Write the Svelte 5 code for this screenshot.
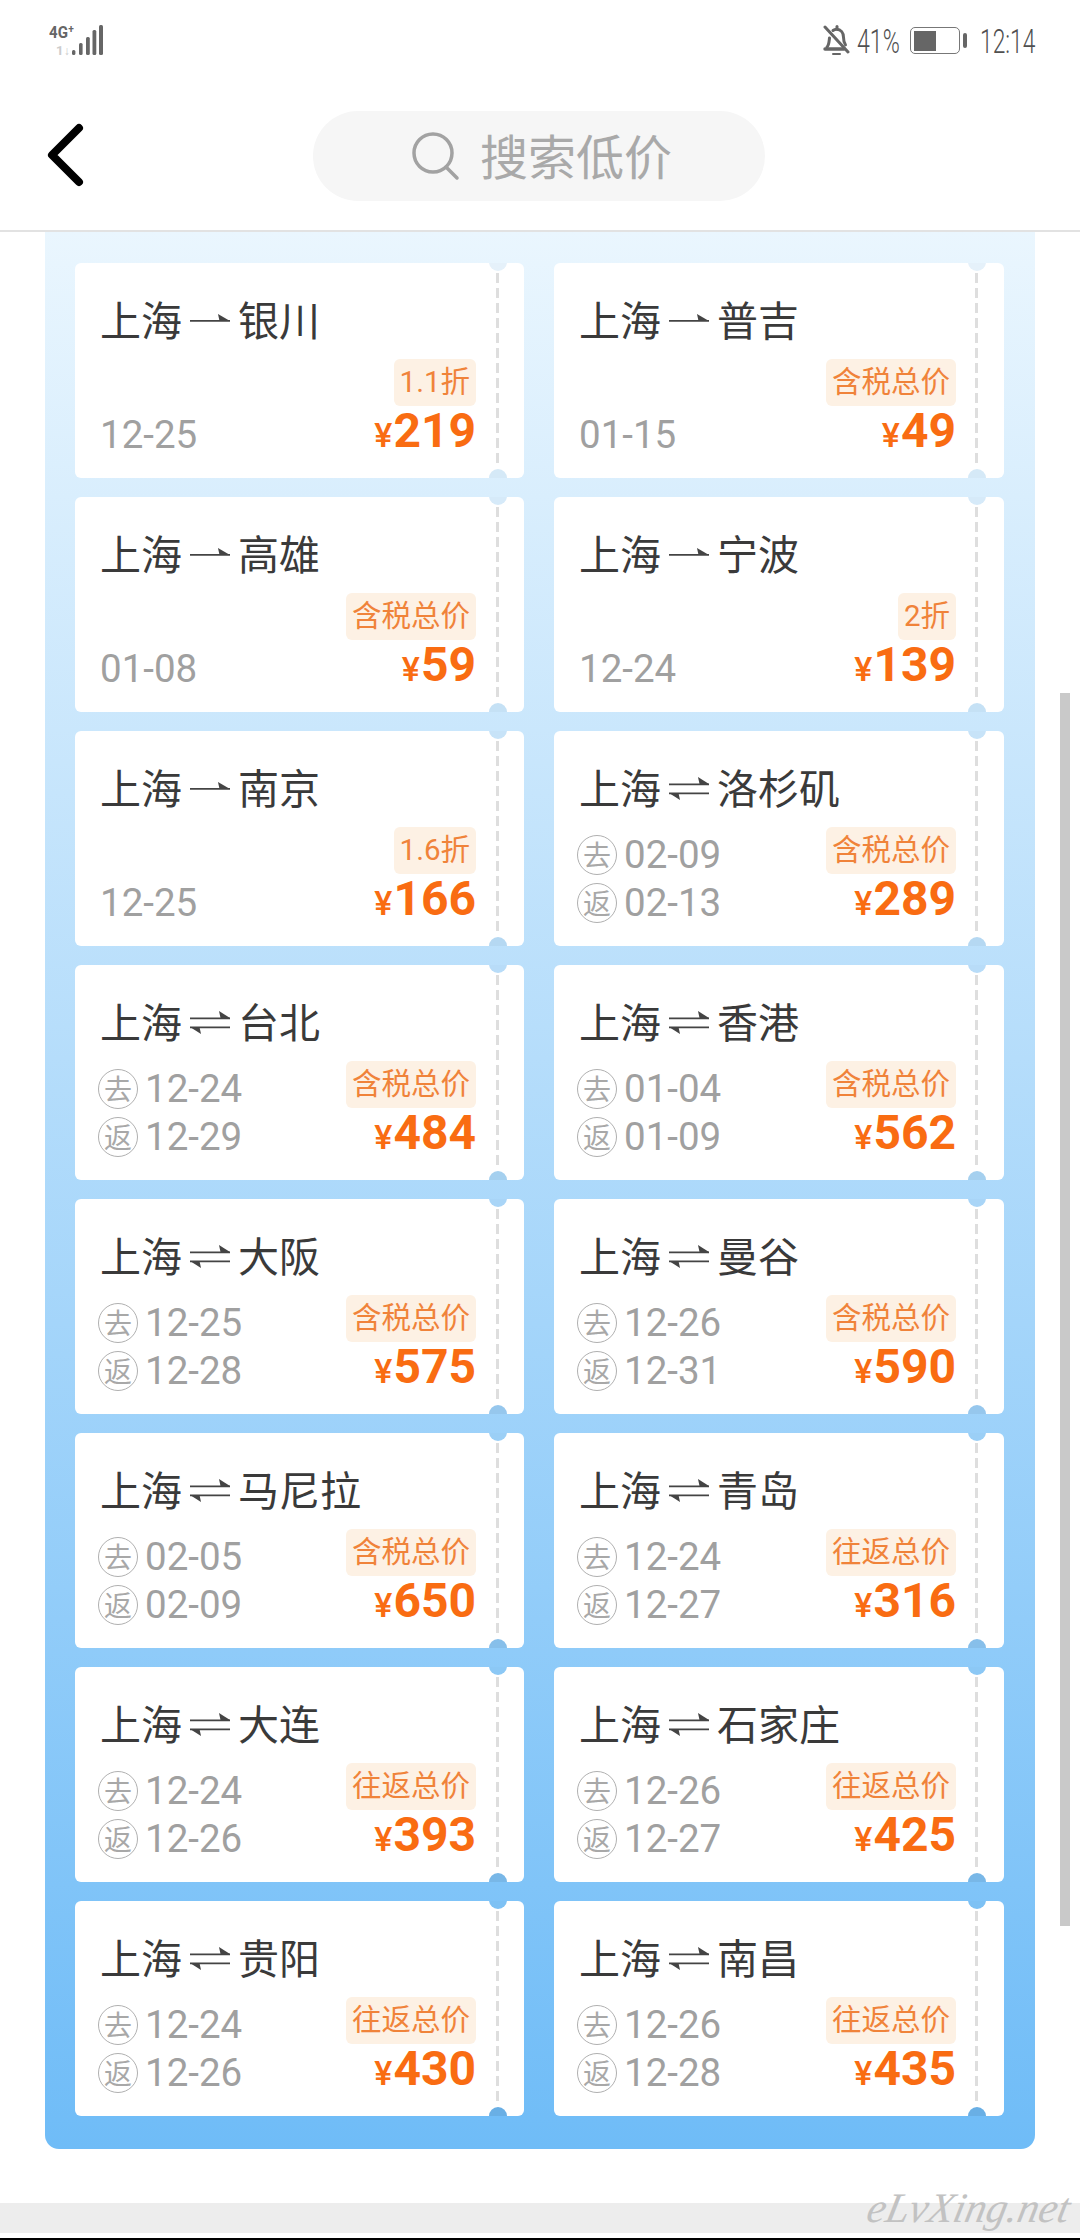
<script>
  const tax = '含税总价';
  const rt = '往返总价';
  const cards = [
    { to: '银川', d1: '12-25', tag: '1.1折', p: 219 },
    { to: '普吉', d1: '01-15', tag: tax, p: 49 },
    { to: '高雄', d1: '01-08', tag: tax, p: 59 },
    { to: '宁波', d1: '12-24', tag: '2折', p: 139 },
    { to: '南京', d1: '12-25', tag: '1.6折', p: 166 },
    { to: '洛杉矶', d1: '02-09', d2: '02-13', tag: tax, p: 289 },
    { to: '台北', d1: '12-24', d2: '12-29', tag: tax, p: 484 },
    { to: '香港', d1: '01-04', d2: '01-09', tag: tax, p: 562 },
    { to: '大阪', d1: '12-25', d2: '12-28', tag: tax, p: 575 },
    { to: '曼谷', d1: '12-26', d2: '12-31', tag: tax, p: 590 },
    { to: '马尼拉', d1: '02-05', d2: '02-09', tag: tax, p: 650 },
    { to: '青岛', d1: '12-24', d2: '12-27', tag: rt, p: 316 },
    { to: '大连', d1: '12-24', d2: '12-26', tag: rt, p: 393 },
    { to: '石家庄', d1: '12-26', d2: '12-27', tag: rt, p: 425 },
    { to: '贵阳', d1: '12-24', d2: '12-26', tag: rt, p: 430 },
    { to: '南昌', d1: '12-26', d2: '12-28', tag: rt, p: 435 }
  ];
  // Notches show the panel gradient through the ticket, a little darker on the lower edge.
  function mix(t, k) {
    const a = [234, 246, 254], b = [111, 188, 247];
    const c = a.map((v, i) => Math.round((v + (b[i] - v) * t) * k));
    return `rgb(${c[0]},${c[1]},${c[2]})`;
  }
  function notch(i) {
    const row = Math.floor(i / 2);
    const top = (263 + row * 234 - 232) / 1917;
    const bottom = (478 + row * 234 - 232) / 1917;
    return `--top:${mix(top, 0.985)};--bottom:${mix(bottom, 0.985 - 0.06 * bottom)}`;
  }
</script>

<div class="screen">
  <div class="status">
    <svg class="net" width="58" height="36" viewBox="0 -4 58 36">
      <text x="0" y="13" class="net4g" textLength="25" lengthAdjust="spacingAndGlyphs">4G⁺</text>
      <text x="7" y="30" class="net1" textLength="14" lengthAdjust="spacingAndGlyphs">1↓</text>
      <rect x="23" y="25" width="3.4" height="5" rx="1.5" fill="#666" />
      <rect x="30" y="18" width="3.6" height="12" rx="1.5" fill="#666" />
      <rect x="37" y="12" width="3.8" height="18" rx="1.5" fill="#666" />
      <rect x="43.5" y="5" width="3.8" height="25" rx="1.5" fill="#666" />
      <rect x="50" y="0" width="4" height="30" rx="1.5" fill="#666" />
    </svg>
    <div class="right">
      <svg width="27" height="31" viewBox="0 0 27 31" fill="none" stroke="#666" stroke-width="3" stroke-linecap="round">
        <path d="M4 22c2-2 2-5 2.500-9M10 5.500c1-.8 2-1.200 3.500-1.200 4.500 0 7 3.500 7 8 0 3 .5 5.500 2 7.500" />
        <path d="M14 1.500v2.500" />
        <path d="M2 24h19" stroke-width="3.400" />
        <path d="M10 29h7" stroke-width="2" />
        <path d="M2 2l23 25" stroke-width="3" />
      </svg>
      <div class="pct"><span class="hand">41%</span></div>
      <div class="battery"><div class="level"></div></div>
      <div class="nub"></div>
      <div class="clock"><span class="hand">12:14</span></div>
    </div>
  </div>

  <header class="head">
    <svg class="back" width="40" height="70" viewBox="0 0 40 70" fill="none" stroke="#000" stroke-width="8" stroke-linecap="round" stroke-linejoin="round">
      <path d="M33 7L6 34l27 27" />
    </svg>
    <div class="search">
      <svg width="54" height="54" viewBox="0 0 54 54" fill="none" stroke="#a2a2a2" stroke-width="3.500" stroke-linecap="round">
        <circle cx="23" cy="23" r="19" />
        <path d="M36 37l11 11" />
      </svg>
      <span>搜索低价</span>
    </div>
  </header>

  <main class="panel">
    {#each cards as c, i}
      <article class="card" style={notch(i)}>
        <i class="hole top"></i>
        <i class="hole bottom"></i>
        <i class="dash"></i>
        <h3 class="title">
          <span>上海</span>
          {#if c.d2}
            <svg class="arrow" width="40" height="24" viewBox="0 0 40 24" fill="#444">
              <path d="M0 7.500h40v1.800H0z" />
              <path d="M40 8L29 1l1.500 7z" />
              <path d="M0 16.500h40v1.800H0z" />
              <path d="M0 17l11 7-1.500-7z" />
            </svg>
          {:else}
            <svg class="arrow" width="40" height="24" viewBox="0 0 40 24" fill="#444">
              <path d="M0 12h40v1.800H0z" />
              <path d="M40 13L28 6l1.500 7z" />
            </svg>
          {/if}
          <span>{c.to}</span>
        </h3>
        <div class="body">
          <div class="dates">
            {#if c.d2}
              <div class="date"><b class="seal">去</b>{c.d1}</div>
              <div class="date"><b class="seal">返</b>{c.d2}</div>
            {:else}
              <div class="date">{c.d1}</div>
            {/if}
          </div>
          <div class="fare">
            <span class="tag">{c.tag}</span>
            <div class="price"><small>¥</small>{c.p}</div>
          </div>
        </div>
      </article>
    {/each}
  </main>

  <div class="scrollbar"></div>
  <div class="mark">eLvXing.net</div>
  <footer class="foot"></footer>
  <div class="edge"></div>
</div>

<style>
  :global(body) { margin: 0; background: #fff; }
  .screen {
    position: relative;
    width: 1080px;
    height: 2240px;
    overflow: hidden;
    background: #fff;
    font-family: Roboto, "Noto Sans CJK SC", sans-serif;
  }
  .status {
    height: 78px;
    box-sizing: border-box;
    padding: 21px 44px 0 49px;
    display: flex;
    justify-content: space-between;
    align-items: flex-start;
  }
  .net4g { font: 700 17px "Roboto", sans-serif; fill: #666; }
  .net1 { font: 700 12px "Roboto", sans-serif; fill: #ccc; }
  .hand {
    display: inline-block;
    font: 300 34px/40px "Roboto", sans-serif;
    color: #505050;
    transform-origin: 0 50%;
    white-space: nowrap;
  }
  .right { display: flex; align-items: flex-start; }
  .right > svg:first-child { margin-top: 4px; }
  .pct { width: 44px; margin-left: 7px; height: 40px; }
  .pct .hand { transform: scaleX(0.68); }
  .battery {
    box-sizing: border-box;
    width: 50px;
    height: 27px;
    margin-left: 9px;
    margin-top: 6px;
    padding: 2.500px;
    border: 1.500px solid #777;
    border-radius: 5px;
  }
  .level { width: 22px; height: 100%; background: #666; }
  .nub { width: 4px; height: 15px; margin: 12px 0 0 3px; background: #666; border-radius: 2px; }
  .clock { width: 56px; height: 40px; margin-left: 13px; }
  .clock .hand { transform: scaleX(0.67); }

  .head {
    box-sizing: border-box;
    height: 154px;
    padding: 0 0 0 46px;
    display: flex;
    align-items: center;
    border-bottom: 2px solid #e2e2e2;
  }
  .back { margin-top: 4px; flex: none; }
  .search {
    box-sizing: border-box;
    width: 452px;
    height: 90px;
    margin: 4px 0 0 227px;
    padding-left: 97px;
    display: flex;
    align-items: center;
    gap: 16px;
    background: #f6f6f6;
    border-radius: 45px;
  }
  .search svg { flex: none; margin-top: 2px; }
  .search span {
    margin-top: -4px;
    font: 400 48px/1 "Noto Sans CJK SC", sans-serif;
    color: #a9a9a9;
  }

  .panel {
    box-sizing: border-box;
    width: 990px;
    height: 1917px;
    margin: 0 0 0 45px;
    padding: 31px 31px 0 30px;
    display: grid;
    grid-template-columns: 449px 450px;
    grid-auto-rows: 215px;
    column-gap: 30px;
    row-gap: 19px;
    background: linear-gradient(180deg, #eaf6fe 0%, #6fbcf7 100%);
    border-radius: 0 0 14px 14px;
  }
  .card {
    position: relative;
    overflow: hidden;
    box-sizing: border-box;
    padding: 25px 48px 0 25px;
    background: #fff;
    border-radius: 6px;
  }
  .hole {
    position: absolute;
    left: 414px;
    width: 18px;
    height: 18px;
    border-radius: 50%;
  }
  .hole.top { top: -10px; background: var(--top); }
  .hole.bottom { bottom: -9px; background: var(--bottom); }
  .dash {
    position: absolute;
    left: 421px;
    top: 10px;
    bottom: 11px;
    width: 3px;
    background: repeating-linear-gradient(180deg, #dedede 0 10px, transparent 10px 15px);
  }
  .title {
    display: flex;
    align-items: center;
    height: 60px;
    margin: 0;
    font: 400 41px/60px "Noto Sans CJK SC", sans-serif;
    color: #3a3a3a;
  }
  .arrow { flex: none; margin: 3px 8px 0 8px; }
  .body {
    display: flex;
    justify-content: space-between;
    align-items: flex-start;
    margin-top: 11px;
  }
  .dates {
    height: 96px;
    margin: 4px 0 0 -2px;
    display: flex;
    flex-direction: column;
    justify-content: flex-end;
    color: #a0a0a0;
    font-size: 38.500px;
  }
  .date { height: 48px; line-height: 48px; display: flex; align-items: center; padding-left: 2px; }
  .seal {
    box-sizing: border-box;
    flex: none;
    width: 40px;
    height: 40px;
    margin-left: -2px;
    margin-right: 7px;
    border: 1.500px solid #b0b0b0;
    border-radius: 50%;
    font: 400 28px/36px "Noto Sans CJK SC", sans-serif;
    text-align: center;
    color: #a8a8a8;
  }
  .fare { display: flex; flex-direction: column; align-items: flex-end; }
  .tag {
    box-sizing: border-box;
    height: 47px;
    padding: 0 6px;
    font: 400 29.500px/47px Roboto, "Noto Sans CJK SC", sans-serif;
    color: #f0833a;
    background: #fdf1e4;
    border-radius: 6px;
  }
  .price {
    margin-top: 3px;
    height: 44px;
    font: 700 48px/44px Roboto, sans-serif;
    color: #f96c12;
  }
  .price small { font: 500 34px/44px Roboto, sans-serif; margin-right: 1px; }

  .scrollbar {
    position: absolute;
    left: 1060px;
    top: 693px;
    width: 10px;
    height: 1233px;
    background: #c9c9c9;
  }
  .foot {
    position: absolute;
    left: 0;
    right: 0;
    top: 2203px;
    height: 30px;
    background: #ededed;
  }
  .edge {
    position: absolute;
    left: 0;
    right: 0;
    top: 2238px;
    height: 2px;
    background: #000;
  }
  .mark {
    position: absolute;
    z-index: 1;
    right: 10px;
    top: 2184px;
    font: italic 400 42px/48px "Liberation Serif", serif;
    color: #c2c2c2;
    transform: skewX(-12deg);
  }
</style>
